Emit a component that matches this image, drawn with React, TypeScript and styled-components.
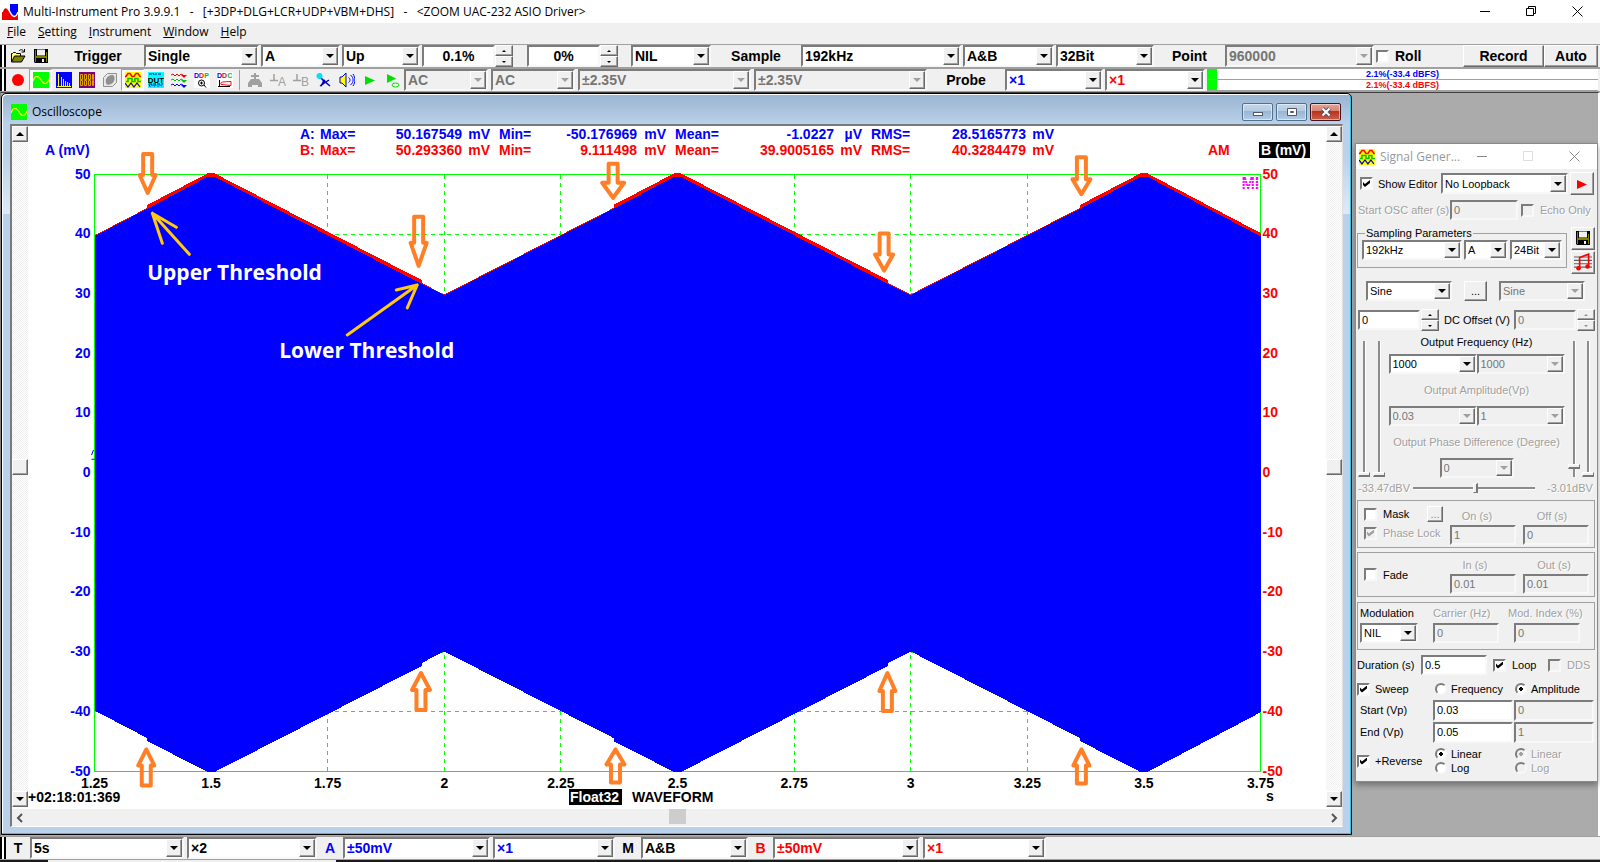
import React, { useLayoutEffect, useRef, useState } from "react";
import styled, { createGlobalStyle, css } from "styled-components";

const BLUE = "#0000ff";
const RED = "#ff0000";
const FACE = "#f0f0f0";

const GlobalStyle = createGlobalStyle`
  *, *::before, *::after { box-sizing: border-box; }
  body { margin: 0; background: ${FACE}; font-family: "Liberation Sans", Arial, sans-serif; color: #000; }
  button, input, select { font: inherit; color: inherit; margin: 0; }
`;

const raised = css`
  background: ${FACE};
  border: 1px solid;
  border-color: #fff #696969 #696969 #fff;
  box-shadow: inset -1px -1px 0 #a0a0a0;
`;

const sunken = css`
  border: 2px solid;
  border-color: #7c7c7c #f8f8f8 #f8f8f8 #7c7c7c;
`;

/* ---------- application frame ---------- */

const Frame = styled.div`
  min-height: 100vh;
  display: flex;
  flex-direction: column;
  overflow: hidden;
`;

const TitleBar = styled.header`
  height: 23px;
  flex: none;
  background: #fff;
  display: flex;
  align-items: center;
  padding-left: 2px;
  font-family: "Open Sans", "Noto Sans", sans-serif;
  font-size: 12px;
  white-space: pre;
`;

const TitleText = styled.h1`
  font: inherit;
  margin: 0 auto 0 5px;
`;

const CaptionButton = styled.button`
  width: 46px;
  height: 20px;
  border: 0;
  padding: 0;
  background: transparent;
  display: grid;
  place-items: center;
`;

const MenuBar = styled.nav`
  height: 21px;
  flex: none;
  display: flex;
  gap: 12px;
  padding-left: 7px;
  font-family: "Open Sans", "Noto Sans", sans-serif;
  font-size: 12px;
  line-height: 18px;
`;

const MenuItem = styled.a`
  color: #000;
  text-decoration: none;
`;

const ToolBar = styled.div`
  height: 24px;
  flex: none;
  display: flex;
  align-items: stretch;
  border-top: 1px solid #a0a0a0;
  border-bottom: 1px solid #a0a0a0;
  padding-right: 2px;
  font-size: 14px;
  font-weight: 700;
`;

const Grip = styled.span`
  width: 6px;
  flex: none;
  background: linear-gradient(90deg, #000 0 2px, #fff 2px 4px, #000 4px);
`;

const BarLabel = styled.label<{ $w: number; $color?: string }>`
  width: ${(p) => p.$w}px;
  flex: none;
  display: flex;
  align-items: center;
  justify-content: center;
  color: ${(p) => p.$color ?? "#000"};
`;

const Space = styled.span<{ $w: number }>`
  width: ${(p) => p.$w}px;
  flex: none;
`;

const ToolButton = styled.button<{ $on?: boolean }>`
  width: 23px;
  flex: none;
  padding: 0;
  border: 1px solid transparent;
  background: transparent;
  display: grid;
  place-items: center;
  ${(p) => p.$on && css`background: #fafafa; border-color: #a0a0a0 #fff #fff #a0a0a0;`}
`;

const Divider = styled.span`
  width: 1px;
  margin: 1px 3px;
  background: #a0a0a0;
`;

const PushButton = styled.button<{ $w?: number; $h?: number; $dim?: boolean }>`
  ${raised}
  flex: none;
  width: ${(p) => (p.$w ? p.$w + "px" : "auto")};
  height: ${(p) => (p.$h ? p.$h + "px" : "auto")};
  padding: 0;
  display: grid;
  place-items: center;
  color: ${(p) => (p.$dim ? "#8a8a8a" : "#000")};
`;

/* ---------- form parts ---------- */

const ComboFrame = styled.span<{ $w: number; $h?: number; $dim?: boolean; $color?: string }>`
  ${sunken}
  width: ${(p) => p.$w}px;
  height: ${(p) => (p.$h ? p.$h + "px" : "auto")};
  flex: none;
  display: grid;
  grid-template: minmax(0, 1fr) / minmax(0, 1fr) 16px;
  background: ${(p) => (p.$dim ? FACE : "#fff")};
  color: ${(p) => (p.$dim ? "#757575" : p.$color ?? "#000")};
`;

const NativeSelect = styled.select`
  grid-area: 1 / 1 / 2 / 3;
  appearance: none;
  border: 0;
  padding: 0 0 0 2px;
  background: transparent;
  outline: 0;
  min-width: 0;
  opacity: 1;
`;

const DropMark = styled.span<{ $dim?: boolean }>`
  ${raised}
  grid-area: 1 / 2;
  pointer-events: none;
  display: grid;
  place-items: center;
  &::after {
    content: "";
    border: 4px solid transparent;
    border-top-color: ${(p) => (p.$dim ? "#a0a0a0" : "#000")};
    border-bottom: 0;
  }
`;

function Combo(props: { label: string; value: string; w: number; h?: number; dim?: boolean; color?: string; id?: string }) {
  return (
    <ComboFrame $w={props.w} $h={props.h} $dim={props.dim} $color={props.color}>
      <NativeSelect id={props.id} aria-label={props.label} disabled={props.dim} defaultValue={props.value}>
        <option>{props.value}</option>
      </NativeSelect>
      <DropMark $dim={props.dim} />
    </ComboFrame>
  );
}

const Field = styled.input<{ $w: number; $h?: number; $center?: boolean }>`
  ${sunken}
  width: ${(p) => p.$w}px;
  height: ${(p) => (p.$h ? p.$h + "px" : "auto")};
  flex: none;
  padding: 0 2px;
  background: #fff;
  text-align: ${(p) => (p.$center ? "center" : "left")};
  border-radius: 0;
  &:disabled { background: ${FACE}; color: #757575; }
`;

const SpinFrame = styled.span<{ $h?: number }>`
  width: 18px;
  height: ${(p) => (p.$h ? p.$h + "px" : "auto")};
  flex: none;
  display: grid;
  grid-template-rows: 1fr 1fr;
`;

const SpinButton = styled.button<{ $down?: boolean }>`
  ${raised}
  padding: 0;
  min-height: 0;
  display: grid;
  place-items: center;
  &::after {
    content: "";
    border: 2px solid transparent;
    border-bottom-color: ${(p) => (p.$down ? "transparent" : "#000")};
    border-top-color: ${(p) => (p.$down ? "#000" : "transparent")};
    border-top-width: ${(p) => (p.$down ? 2 : 0)}px;
    border-bottom-width: ${(p) => (p.$down ? 0 : 2)}px;
  }
  &:disabled::after { opacity: 0.4; }
`;

function Spin({ label, h, dim }: { label: string; h?: number; dim?: boolean }) {
  return (
    <SpinFrame $h={h}>
      <SpinButton aria-label={label + " up"} disabled={dim} />
      <SpinButton $down aria-label={label + " down"} disabled={dim} />
    </SpinFrame>
  );
}

const Choice = styled.label<{ $w?: number; $gap?: number; $dim?: boolean }>`
  display: flex;
  align-items: center;
  flex: none;
  gap: ${(p) => p.$gap ?? 6}px;
  width: ${(p) => (p.$w ? p.$w + "px" : "auto")};
  color: ${(p) => (p.$dim ? "#a0a0a0" : "#000")};
  ${(p) => p.$dim && css`text-shadow: 1px 1px 0 #fff;`}
`;

const Tick = styled.input`
  ${sunken}
  appearance: none;
  width: 13px;
  height: 13px;
  flex: none;
  background: #fff;
  display: grid;
  place-items: center;
  &:disabled { background: ${FACE}; }
  &:checked::after {
    content: "";
    width: 7px;
    height: 7px;
    background: #000;
    clip-path: polygon(0 28%, 28% 57%, 100% 0, 100% 42%, 28% 100%, 0 71%);
  }
  &:checked:disabled::after { background: #a0a0a0; }
`;

const Dot = styled.input`
  ${sunken}
  appearance: none;
  width: 12px;
  height: 12px;
  flex: none;
  border-radius: 50%;
  background: #fff;
  &:disabled { background: ${FACE}; }
  &:checked { background: radial-gradient(circle, #000 0 2px, #fff 2px); }
  &:checked:disabled { background: radial-gradient(circle, #a0a0a0 0 2px, ${FACE} 2px); }
`;

/* ---------- level meter ---------- */

const Meter = styled.div`
  flex: 1;
  min-width: 0;
  margin-left: 2px;
  display: grid;
  grid-template-rows: 11px 11px;
  background: #fff;
  font-size: 9px;
  line-height: 10px;
`;

const MeterRow = styled.div<{ $color: string }>`
  color: ${(p) => p.$color};
  text-align: center;
  border-bottom: 1px solid #a0a0a0;
  background: linear-gradient(#0f0, #0f0) left / 10px 100% no-repeat;
`;

/* ---------- pictograms ---------- */

const Svg16 = (p: { children: React.ReactNode; size?: number }) => (
  <svg width={p.size ?? 16} height={p.size ?? 16} viewBox="0 0 16 16" aria-hidden="true">
    {p.children}
  </svg>
);

const AppIcon = () => (
  <Svg16>
    <rect width="16" height="16" fill="#0000ff" />
    <path d="M0 8C2 2 5 2 8 8s6 6 8 0v8H0z" fill="#f00000" />
    <path d="M0 0h8v8C5 2 2 2 0 8z" fill="#fff" />
    <path d="M0 8C2 2 5 2 8 8s6 6 8 0" fill="none" stroke="#fff" strokeWidth="1.5" />
  </Svg16>
);
const OpenIcon = () => (
  <Svg16>
    <path d="M1.5 14V5.500h1l1-1h2l1 1h4V8" fill="#ffff80" stroke="#000" />
    <path d="M1.500 14l3-6h10.500l-3.500 6z" fill="#808000" stroke="#000" />
    <path d="M9 3c1.500-2 3.500-1.500 5 .5M14.500 1v3h-3" fill="none" stroke="#000" />
  </Svg16>
);
const SaveIcon = () => (
  <Svg16>
    <path d="M1 1h14v14H2l-1-1z" fill="#000" />
    <path d="M2 2h1v12H2zM13 4h1v10h-1zM3 8h10v2H3z" fill="#808000" />
    <rect x="4" y="1.500" width="8" height="6" fill="#f0f0f0" />
    <rect x="9" y="11" width="2" height="3" fill="#f0f0f0" />
  </Svg16>
);
const ScopeIcon = () => (
  <Svg16>
    <rect width="16" height="16" fill="#00ff00" />
    <path d="M0 9C2 3 5 3 8 8s6 5 8-1" fill="none" stroke="#ffff00" strokeWidth="1.200" />
  </Svg16>
);
const SpectrumIcon = () => (
  <Svg16>
    <rect width="16" height="16" fill="#0000ff" />
    <path d="M2.500 2v12M5.500 5v9M7.500 7v7M9.500 9v5M11.500 10v4M13.500 11v3M1 14.500h14" stroke="#ffff00" />
  </Svg16>
);
const MultiIcon = () => (
  <Svg16>
    <rect width="16" height="16" fill="#800080" />
    <path
      d="M1.500 2.500h2v5h-2zM5.500 2.500h2v5h-2zM9.500 2.500h2v5h-2zM13.500 2.500h1v5h-1zM1.500 8.500h2v5h-2zM5.500 8.500h2v5h-2zM9.500 8.500h2v5h-2zM13.500 8.500h1v5h-1z"
      fill="none"
      stroke="#e0a000"
    />
  </Svg16>
);
const CubeIcon = () => (
  <Svg16>
    <path d="M1.500 5.500l4-4h9v9l-4 4h-9z" fill="#e8e8e8" stroke="#909090" />
    <path d="M4 7c2-4 7-5 8-3s1 6-3 8-6 0-5-5z" fill="#909090" />
  </Svg16>
);
const GeneratorIcon = () => (
  <Svg16>
    <rect width="16" height="16" fill="#ffff00" />
    <path d="M0 4.500h1l2-3h2l2 3h2l2-3h2l2 3h1" fill="none" stroke="#f00" strokeWidth="1.500" />
    <path d="M1 9.500h2v-3h4v3h3v-3h3v3h3" fill="none" stroke="#00c000" strokeWidth="1.500" />
    <path d="M0 11l3 4 3-4 3 4 3-4 3 4" fill="none" stroke="#0000c0" strokeWidth="1.200" />
  </Svg16>
);
const DutIcon = () => (
  <Svg16>
    <rect width="16" height="16" fill="#00ffff" />
    <path d="M1 2h3l1-1 1 2 1-1h2M10 2h4M1 12.500l1 2 2-2 2 2 2-2 2 2 2-2 2 2M1 12h14" fill="none" stroke="#0000c0" strokeDasharray="3 1" />
    <text x="8" y="10.500" textAnchor="middle" fontSize="8" fontWeight="700" fill="#000">DUT</text>
  </Svg16>
);
const FiltersIcon = () => (
  <Svg16>
    {[["#f00", 3], ["#00c000", 8], ["#00f", 13]].map(([c, y]) => (
      <g key={c} fill="none" stroke={c as string}>
        <path d={`M0 ${y}l2-1 2 2 2-2 2 2 2-2 2 1`} />
        <path d={`M10 ${y}h6l-3 3z`} fill={c as string} stroke="none" />
      </g>
    ))}
  </Svg16>
);
const LetterMark = ({ a }: { a: string }) => (
  <text y="6" fontSize="7" fontWeight="700">
    <tspan fill="#00f">{a[0]}</tspan>
    <tspan fill="#f00">{a[1]}</tspan>
    <tspan fill="#00c000">{a[2]}</tspan>
  </text>
);
const DdpIcon = () => (
  <Svg16>
    <rect width="16" height="16" fill="#fff" />
    <LetterMark a="DDP" />
    <circle cx="7.500" cy="11" r="3" fill="none" stroke="#000" />
    <path d="M6 11h3M7.500 9.500v3M10 13l2 2.500" stroke="#000" />
  </Svg16>
);
const DdcIcon = () => (
  <Svg16>
    <rect width="16" height="16" fill="#fff" />
    <LetterMark a="DDC" />
    <path d="M2.500 8v7M1 14.500h12" stroke="#000" />
    <path d="M4 12.500c-1-3 2-2.500 10-3v4z" fill="none" stroke="#f00" />
  </Svg16>
);
const TapIcon = () => (
  <Svg16>
    <path d="M7 1h2v2h3v2H9v2h3l3 4v4h-4v-2H5v2H1v-4l3-4h3V5H4V3h3z" fill="#a0a0a0" />
  </Svg16>
);
const GroundIcon = ({ c }: { c: string }) => (
  <Svg16>
    <path d="M4 2v6M0 8.500h8" stroke="#a0a0a0" strokeWidth="1.500" />
    <text x="8" y="14" fontSize="12" fontWeight="400" fill="#a0a0a0">{c}</text>
  </Svg16>
);
const ProbeIcon = () => (
  <Svg16>
    <path d="M3 4l5 5M8 9l-3 5M8 9l6 5M4 14l9-6" stroke="#0000c0" strokeWidth="1.500" />
    <circle cx="3.500" cy="4" r="3" fill="#00e0ff" />
    <circle cx="8" cy="9" r="1.500" fill="#0000c0" />
  </Svg16>
);
const SpeakerIcon = () => (
  <Svg16>
    <path d="M1 5h2l4-4v14l-4-4H1z" fill="#ffff00" stroke="#0000c0" />
    <path d="M9.500 5.500c2 1 2 4 0 5M11.500 3c3.500 3 3.500 7 0 10M14 2c2.500 4 2.500 8 0 12" fill="none" stroke="#00f" />
  </Svg16>
);
const PlayIcon = ({ c = "#00e000", loop }: { c?: string; loop?: boolean }) => (
  <Svg16>
    <path d={loop ? "M2 2l9 4.500L2 11z" : "M3 4l10 4.500L3 13z"} fill={c} />
    {loop && <ellipse cx="10.500" cy="13" rx="3.500" ry="2" fill="none" stroke={c} />}
  </Svg16>
);
const NoteIcon = () => (
  <Svg16 size={18}>
    <path d="M0 3.500h16M0 6.500h16M0 9.500h16M0 12.500h16" stroke="#606060" />
    <path d="M5 13V4l8-3v11" fill="none" stroke="#f00" strokeWidth="1.500" />
    <circle cx="4" cy="13.500" r="2" fill="#f00" />
    <circle cx="12" cy="12" r="2" fill="#f00" />
  </Svg16>
);
const CaptionGlyph = ({ kind, color = "#000" }: { kind: "min" | "max" | "restore" | "close"; color?: string }) => (
  <svg width="11" height="11" viewBox="0 0 11 11" fill="none" stroke={color} aria-hidden="true">
    {kind === "min" && <path d="M0 5.500h10" />}
    {kind === "max" && <path d="M.5.5h9v9h-9z" />}
    {kind === "restore" && <path d="M.5 2.500h7v7h-7zM2.500 2.500v-2h7v7h-2" />}
    {kind === "close" && <path d="M.5.5l10 10M10.500.5l-10 10" />}
  </svg>
);

/* ---------- workspace and oscilloscope window ---------- */

const Workspace = styled.main`
  flex: 1;
  display: flex;
  align-items: flex-start;
  gap: 3px;
  padding-bottom: 1px;
  background: #ababab;
  border-top: 1px solid #404040;
  border-left: 1px solid #808080;
  border-right: 2px solid #fff;
`;

const ScopeWindow = styled.section`
  flex: 1;
  min-width: 0;
  align-self: stretch;
  display: flex;
  flex-direction: column;
  border: 1px solid #000;
  border-radius: 5px 5px 0 0;
  box-shadow: inset -1px -1px 0 #2fc4ea, inset 1px 1px 0 #fff;
  padding: 0 8px 7px 8px;
  background: linear-gradient(#99b4d1 0, #b9d1ea 30px, #b9d1ea 60px, #dfeaf6 120px, #b9d1ea 120px);
`;

const ScopeCaption = styled.div`
  height: 30px;
  flex: none;
  display: flex;
  align-items: center;
  gap: 3px;
  padding: 6px 2px 0 1px;
  font-family: "Open Sans", "Noto Sans", sans-serif;
  font-size: 12px;
  line-height: 16px;
`;

const ScopeTitle = styled.h2`
  font: inherit;
  margin: 0 auto 0 2px;
`;

const GlassButton = styled.button<{ $close?: boolean }>`
  width: 31px;
  height: 18px;
  padding: 0;
  display: grid;
  place-items: center;
  border: 1px solid ${(p) => (p.$close ? "#43141a" : "#52708f")};
  border-radius: 2px;
  box-shadow: inset 0 0 0 1px rgba(255, 255, 255, 0.5);
  background: ${(p) =>
    p.$close
      ? "linear-gradient(#e6a397, #d98272 45%, #b8321c 46%, #c9604b)"
      : "linear-gradient(#c3d6ea, #b4cbe3 45%, #98b5d2 46%, #b3cce6)"};
`;

const ScopeBody = styled.div`
  flex: 1;
  min-height: 0;
  display: grid;
  grid-template: minmax(0, 1fr) 17px / 16px minmax(0, 1fr) 16px;
  border: 2px solid;
  border-color: #7a7a7a #e0e0e0 #fff #7a7a7a;
  border-right-width: 1px;
  border-bottom-width: 1px;
  background: #fff;
`;

const VerticalBar = styled.div`
  display: flex;
  flex-direction: column;
  justify-content: space-between;
  margin-bottom: 2px;
  background: repeating-conic-gradient(#fff 0 25%, #efefef 0 50%) 0 0 / 2px 2px;
`;

const BarButton = styled.button<{ $dir?: "up" | "down" }>`
  ${raised}
  width: 16px;
  height: 16px;
  padding: 0;
  display: grid;
  place-items: center;
  ${(p) =>
    p.$dir &&
    css`
      &::after {
        content: "";
        border: 4px solid transparent;
        border-${p.$dir === "up" ? "bottom" : "top"}-color: #000;
        border-${p.$dir === "up" ? "top" : "bottom"}: 0;
      }
    `}
`;

const HorizontalBar = styled.div`
  grid-column: 1 / 4;
  display: flex;
  justify-content: space-between;
  align-items: stretch;
  background: ${FACE};
`;

const FlatButton = styled.button`
  width: 16px;
  border: 0;
  padding: 0;
  background: transparent;
  display: grid;
  place-items: center;
`;

const Thumb = styled.span`
  width: 17px;
  height: 15px;
  background: #cdcdcd;
`;

const PlotHost = styled.div`
  min-width: 0;
  min-height: 0;
  overflow: hidden;
  & > svg { display: block; }
`;

type Arrow = { t: number; v: number; head: number; length: number; half: number; up?: boolean };

const ARROWS: Arrow[] = [
  { t: 1.364, v: 46.4, head: 21, length: 43, half: 9 },
  { t: 1.945, v: 34.2, head: 26, length: 53, half: 9 },
  { t: 2.362, v: 45.6, head: 18, length: 38, half: 12 },
  { t: 2.943, v: 33.4, head: 19, length: 41, half: 10 },
  { t: 3.366, v: 46.2, head: 18, length: 41, half: 10 },
  { t: 1.361, v: -45.8, head: 19, length: 40, half: 9, up: true },
  { t: 1.95, v: -33, head: 20, length: 41, half: 10, up: true },
  { t: 2.367, v: -45.8, head: 18, length: 37, half: 10, up: true },
  { t: 2.95, v: -33, head: 21, length: 42, half: 9, up: true },
  { t: 3.366, v: -45.8, head: 19, length: 38, half: 9, up: true },
];

const T0 = 1.25;
const T1 = 3.75;
const TICKS = Array.from({ length: 11 }, (_, i) => T0 + i * 0.25);
const LEVELS = [50, 40, 30, 20, 10, 0, -10, -20, -30, -40, -50];

/* Envelope of the swept sine; the gain steps up at the upper threshold and back at the lower one. */
function envelope(extra: number, step: number): [number, number][] {
  const pts: [number, number][] = [[T0, 39.8]];
  for (let peak = 1.5; peak < T1; peak += 1) {
    const up = peak - 0.137;
    const down = peak + 0.452;
    pts.push([up, 44.4], [up, 44.4 + step], [peak - 0.007, 50 + extra], [peak + 0.007, 50 + extra]);
    if (down < T1) pts.push([down, 31.8 + step], [down, 31.8], [peak + 0.5, 29.9]);
  }
  pts.push([T1, 40 + extra]);
  return pts;
}

const STATS = [
  { y: 13, color: BLUE, name: "A:", values: [["50.167549", "mV"], ["-50.176969", "mV"], ["-1.0227", "µV"], ["28.5165773", "mV"]] },
  { y: 29, color: RED, name: "B:", values: [["50.293360", "mV"], ["9.111498", "mV"], ["39.9005165", "mV"], ["40.3284479", "mV"]] },
];
const STAT_COLUMNS = [
  { title: "Max=", x: -357, num: -215, unit: -187 },
  { title: "Min=", x: -178, num: -40, unit: -11 },
  { title: "Mean=", x: -2, num: 157, unit: 185 },
  { title: "RMS=", x: 194, num: 349, unit: 377 },
];

function WavePlot() {
  const host = useRef<HTMLDivElement>(null);
  const [size, setSize] = useState({ w: 1298, h: 683 });

  useLayoutEffect(() => {
    const el = host.current;
    if (!el) return;
    const read = () => setSize({ w: el.clientWidth, h: el.clientHeight });
    read();
    const watcher = new ResizeObserver(read);
    watcher.observe(el);
    return () => watcher.disconnect();
  }, []);

  const { w, h } = size;
  const left = 66.5;
  const right = w - 65.5;
  const top = 48.5;
  const bottom = h - 37.5;
  const cx = Math.round(w / 2);
  const X = (t: number) => left + ((t - T0) / (T1 - T0)) * (right - left);
  const Y = (v: number) => top + ((50 - v) / 100) * (bottom - top);
  const snap = (n: number) => Math.floor(n) + 0.5;
  const line = (pts: [number, number][], sign = 1) => pts.map(([t, v]) => `${X(t)},${Y(sign * v)}`).join(" ");
  const under = line([...envelope(0.1, 0.5)].reverse(), -1);
  const redTop = line(envelope(0.2, 0.5));
  const blueTop = line(envelope(-0.2, 0).map(([t, v]) => [t, v - 0.15] as [number, number]));

  const arrowPath = (a: Arrow) => {
    const s = a.up ? -1 : 1;
    const x = X(a.t);
    const tip = Y(a.v) - 3 * s;
    const neck = tip - (a.head - 3) * s;
    const end = tip - (a.length - 4) * s;
    return `M${x - 4.5} ${end}H${x + 4.5}V${neck}H${x + a.half - 1}L${x} ${tip}L${x - a.half + 1} ${neck}H${x - 4.5}Z`;
  };
  const pointer = (x: number, y: number, rest: string) => <path d={`M${x} ${y}${rest}`} />;

  return (
    <PlotHost ref={host}>
      <svg width={w} height={h} fontFamily='"Liberation Sans", Arial, sans-serif' fontSize="14" fontWeight="700">
        <g stroke="#00ff00" strokeDasharray="4 4" shapeRendering="crispEdges">
          {TICKS.slice(1, -1).map((t) => (
            <path key={t} d={`M${snap(X(t))} ${top}V${bottom}`} />
          ))}
          {LEVELS.slice(1, -1).map((v) => (
            <path key={v} d={`M${left} ${snap(Y(v))}H${right}`} />
          ))}
        </g>
        <rect x={left} y={top} width={right - left} height={bottom - top} fill="none" stroke="#00ff00" shapeRendering="crispEdges" />
        <g shapeRendering="crispEdges">
          <polygon points={`${redTop} ${X(T1)},${Y(0)} ${X(T0)},${Y(0)}`} fill={RED} />
          <polygon points={`${blueTop} ${under}`} fill={BLUE} />
        </g>

        <g fill={BLUE} textAnchor="end">
          {LEVELS.map((v) => (
            <text key={v} x={left - 4} y={Math.round(Y(v)) + 4}>{v}</text>
          ))}
        </g>
        <g fill={RED}>
          {LEVELS.map((v) => (
            <text key={v} x={right + 2} y={Math.round(Y(v)) + 4}>{v}</text>
          ))}
        </g>
        <g textAnchor="middle">
          {TICKS.map((t) => (
            <text key={t} x={X(t)} y={h - 21}>{t}</text>
          ))}
        </g>
        <text x={17} y={29} fill={BLUE}>A (mV)</text>
        <text x={w - 118} y={29} fill={RED}>AM</text>
        <rect x={w - 67} y={16} width={51} height={16} />
        <text x={w - 65} y={29} fill="#fff">B (mV)</text>
        <text x={right - 19} y={63} fill="#ff00ff" fontSize="16">MI</text>
        <path d={`M${right - 20} 54.500h19M${right - 20} 57.500h19M${right - 20} 60.500h19`} stroke="#fff" />
        <text x={0} y={h - 7}>+02:18:01:369</text>
        <rect x={cx - 108} y={h - 20} width={53} height={16} />
        <text x={cx - 107} y={h - 7} fill="#fff">Float32</text>
        <text x={cx - 45} y={h - 7}>WAVEFORM</text>
        <text x={w - 60} y={h - 8}>s</text>
        <path d={`M${left - 3} ${Y(3)}l2-5M${left - 3} ${Y(2.300)}h3`} fill="none" stroke={BLUE} />

        {STATS.map((row) => (
          <g key={row.name} fill={row.color}>
            <text x={cx - 377} y={row.y}>{row.name}</text>
            {STAT_COLUMNS.map((c, i) => (
              <React.Fragment key={c.title}>
                <text x={cx + c.x} y={row.y}>{c.title}</text>
                <text x={cx + c.num} y={row.y} textAnchor="end">{row.values[i][0]}</text>
                <text x={cx + c.unit} y={row.y} textAnchor="end">{row.values[i][1]}</text>
              </React.Fragment>
            ))}
          </g>
        ))}

        <g fill="none" stroke="#ff7f27" strokeWidth="4" strokeLinejoin="round">
          {ARROWS.map((a, i) => (
            <path key={i} d={arrowPath(a)} />
          ))}
        </g>
        <g fill="none" stroke="#ffc90e" strokeWidth="3" strokeLinecap="round">
          {pointer(X(1.374), Y(43.5), "l37 41m-37-41l24 14m-24-14l10 30")}
          {pointer(X(1.942), Y(31.5), "l-70 50m70-50l-21 5m21-5l-10 23")}
        </g>
        <g fill="#fff" fontFamily='"Open Sans", "Noto Sans", sans-serif' fontSize="21">
          <text x={X(1.363)} y={Y(32.4)}>Upper Threshold</text>
          <text x={X(1.646)} y={Y(19.3)}>Lower Threshold</text>
        </g>
      </svg>
    </PlotHost>
  );
}

function Oscilloscope() {
  return (
    <ScopeWindow>
      <ScopeCaption>
        <ScopeIcon />
        <ScopeTitle>Oscilloscope</ScopeTitle>
        <GlassButton aria-label="Minimize">
          <svg width="12" height="10"><rect x="1.500" y="5.500" width="9" height="3" fill="#fff" stroke="#535666" /></svg>
        </GlassButton>
        <GlassButton aria-label="Maximize">
          <svg width="12" height="10"><path d="M1.500 1.500h9v7h-9zM4.500 4.500h3v1h-3z" fill="#fff" stroke="#535666" /></svg>
        </GlassButton>
        <GlassButton $close aria-label="Close">
          <svg width="12" height="10">
            <path d="M2.500 1.500l7 7M9.500 1.500l-7 7" stroke="#535666" strokeWidth="4" />
            <path d="M2.500 1.500l7 7M9.500 1.500l-7 7" stroke="#fff" strokeWidth="2" />
          </svg>
        </GlassButton>
      </ScopeCaption>
      <ScopeBody>
        <VerticalBar>
          <BarButton $dir="up" aria-label="A scale up" />
          <BarButton aria-label="A scale position" />
          <BarButton $dir="down" aria-label="A scale down" />
        </VerticalBar>
        <WavePlot />
        <VerticalBar>
          <BarButton $dir="up" aria-label="B scale up" />
          <BarButton aria-label="B scale position" />
          <BarButton $dir="down" aria-label="B scale down" />
        </VerticalBar>
        <HorizontalBar>
          <FlatButton aria-label="Scroll left">
            <svg width="8" height="10"><path d="M6 1L2 5l4 4" fill="none" stroke="#555" strokeWidth="2" /></svg>
          </FlatButton>
          <Thumb />
          <FlatButton aria-label="Scroll right">
            <svg width="8" height="10"><path d="M2 1l4 4-4 4" fill="none" stroke="#555" strokeWidth="2" /></svg>
          </FlatButton>
        </HorizontalBar>
      </ScopeBody>
    </ScopeWindow>
  );
}

/* ---------- signal generator ---------- */

const GeneratorWindow = styled.aside`
  width: 243px;
  flex: none;
  margin-top: 50px;
  padding-bottom: 5px;
  border: 1px solid #8a8a8a;
  background: ${FACE};
  box-shadow: 0 3px 6px rgba(0, 0, 0, 0.35);
  font-size: 11px;
  line-height: 14px;
`;

const GeneratorCaption = styled.div`
  height: 25px;
  display: flex;
  align-items: center;
  padding-left: 3px;
  background: #fff;
  color: #999;
  font-family: "Open Sans", "Noto Sans", sans-serif;
  font-size: 12px;
`;

const GeneratorTitle = styled.h2`
  font: inherit;
  margin: 0 auto 0 5px;
  white-space: nowrap;
`;

const Row = styled.div<{ $h: number; $top?: number; $left?: number; $gap?: number }>`
  height: ${(p) => p.$h}px;
  margin-top: ${(p) => p.$top ?? 0}px;
  padding-left: ${(p) => p.$left ?? 2}px;
  display: flex;
  align-items: center;
  gap: ${(p) => p.$gap ?? 0}px;
`;

const Caption = styled.label<{ $w?: number; $dim?: boolean; $center?: boolean }>`
  width: ${(p) => (p.$w ? p.$w + "px" : "auto")};
  flex: none;
  white-space: nowrap;
  text-align: ${(p) => (p.$center ? "center" : "left")};
  color: ${(p) => (p.$dim ? "#a0a0a0" : "#000")};
  ${(p) => p.$dim && css`text-shadow: 1px 1px 0 #fff;`}
`;

const Sampling = styled.fieldset`
  width: 210px;
  flex: none;
  height: 42px;
  align-self: flex-start;
  margin: 0;
  padding: 0 0 0 4px;
  border: 1px solid #a0a0a0;
  display: flex;
  gap: 2px;
  align-items: flex-start;
  & > legend { padding: 0 1px; margin-left: 3px; line-height: 14px; }
`;

const ButtonStack = styled.div`
  display: flex;
  flex-direction: column;
  gap: 1px;
`;

const Group = styled.div<{ $top: number }>`
  margin: ${(p) => p.$top}px 2px 0 1px;
  border: 1px solid #a0a0a0;
  display: flex;
  align-items: flex-start;
`;

const Column = styled.div<{ $w: number; $h?: number; $left?: number; $end?: boolean }>`
  width: ${(p) => p.$w}px;
  height: ${(p) => (p.$h ? p.$h + "px" : "auto")};
  padding-left: ${(p) => p.$left ?? 0}px;
  flex: none;
  display: flex;
  flex-direction: column;
  justify-content: ${(p) => (p.$end ? "flex-end" : "center")};
`;

const Mixer = styled.div`
  height: 144px;
  margin-top: 4px;
  padding: 0 3px 0 2px;
  display: flex;
  justify-content: space-between;
`;

const MixerCenter = styled.div`
  width: 178px;
  display: flex;
  flex-direction: column;
  align-items: center;
`;

const VerticalSlider = styled.input`
  appearance: none;
  writing-mode: vertical-lr;
  direction: rtl;
  width: 12px;
  height: 136px;
  margin-top: 6px;
  background: transparent;
  &::-webkit-slider-runnable-track {
    width: 3px;
    background: linear-gradient(90deg, #8c8c8c 2px, #fff 2px);
  }
  &::-webkit-slider-thumb {
    appearance: none;
    width: 12px;
    height: 5px;
    margin-left: -5px;
    background: #f0f0f0;
    border: 1px solid;
    border-color: #fff #777 #777 #fff;
    border-bottom-width: 2px;
  }
`;

const Pair = styled.div`
  display: flex;
`;

const LevelSlider = styled.input`
  appearance: none;
  width: 122px;
  height: 12px;
  background: transparent;
  &::-webkit-slider-runnable-track {
    height: 3px;
    background: linear-gradient(#8c8c8c 2px, #fff 2px);
  }
  &::-webkit-slider-thumb {
    appearance: none;
    width: 5px;
    height: 10px;
    margin-top: -4px;
    background: #f0f0f0;
    border: 1px solid;
    border-color: #fff #777 #777 #fff;
    border-right-width: 2px;
  }
`;

function SignalGenerator() {
  return (
    <GeneratorWindow>
      <GeneratorCaption>
        <GeneratorIcon />
        <GeneratorTitle>Signal Gener...</GeneratorTitle>
        <CaptionButton aria-label="Minimize generator"><CaptionGlyph kind="min" color="#888" /></CaptionButton>
        <CaptionButton aria-label="Maximize generator"><CaptionGlyph kind="max" color="#ddd" /></CaptionButton>
        <CaptionButton aria-label="Close generator"><CaptionGlyph kind="close" color="#888" /></CaptionButton>
      </GeneratorCaption>

      <Row $h={23} $top={3} $left={4}>
        <Choice $w={81} $gap={5}><Tick type="checkbox" defaultChecked />Show Editor</Choice>
        <Combo label="Loopback" value="No Loopback" w={127} h={21} />
        <Space $w={2} />
        <PushButton $w={24} $h={23} aria-label="Start generator"><PlayIcon c={RED} /></PushButton>
      </Row>
      <Row $h={20} $top={5}>
        <Caption $w={92} $dim htmlFor="start-osc">Start OSC after (s)</Caption>
        <Field id="start-osc" $w={68} $h={20} defaultValue="0" disabled />
        <Space $w={3} />
        <Choice $dim><Tick type="checkbox" disabled />Echo Only</Choice>
      </Row>
      <Row $h={48} $top={6} $left={1} $gap={4}>
        <Sampling>
          <legend>Sampling Parameters</legend>
          <Combo label="Sampling rate" value="192kHz" w={100} h={20} />
          <Combo label="Channels" value="A" w={44} h={20} />
          <Combo label="Bit resolution" value="24Bit" w={52} h={20} />
        </Sampling>
        <ButtonStack>
          <PushButton $w={24} $h={23} aria-label="Save"><SaveIcon /></PushButton>
          <PushButton $w={24} $h={23} aria-label="Music scale"><NoteIcon /></PushButton>
        </ButtonStack>
      </Row>
      <Row $h={20} $top={7} $left={10} $gap={12}>
        <Combo label="Waveform A" value="Sine" w={86} h={20} />
        <PushButton $w={23} $h={20}>...</PushButton>
        <Combo label="Waveform B" value="Sine" w={86} h={20} dim />
      </Row>
      <Row $h={22} $top={8} $gap={1}>
        <Field aria-label="DC offset A" $w={62} $h={20} defaultValue="0" />
        <Spin label="DC offset A" h={22} />
        <Space $w={3} />
        <Caption $w={69} htmlFor="dc-b">DC Offset (V)</Caption>
        <Field id="dc-b" $w={62} $h={20} defaultValue="0" disabled />
        <Spin label="DC offset B" h={22} dim />
      </Row>

      <Mixer>
        <Pair>
          <VerticalSlider type="range" aria-label="Level A coarse" defaultValue={0} />
          <Space $w={3} />
          <VerticalSlider type="range" aria-label="Level A fine" defaultValue={0} />
        </Pair>
        <MixerCenter>
          <Row $h={14} $left={0}><Caption htmlFor="freq">Output Frequency (Hz)</Caption></Row>
          <Row $h={20} $top={5} $left={0}>
            <Combo id="freq" label="Output frequency A" value="1000" w={88} h={20} />
            <Combo label="Output frequency B" value="1000" w={88} h={20} dim />
          </Row>
          <Row $h={32} $left={0}><Caption $dim htmlFor="amp">Output Amplitude(Vp)</Caption></Row>
          <Row $h={20} $left={0}>
            <Combo id="amp" label="Output amplitude A" value="0.03" w={88} h={20} dim />
            <Combo label="Output amplitude B" value="1" w={88} h={20} dim />
          </Row>
          <Row $h={32} $left={0}><Caption $dim htmlFor="phase">Output Phase Difference (Degree)</Caption></Row>
          <Combo id="phase" label="Phase difference" value="0" w={74} h={20} dim />
        </MixerCenter>
        <Pair>
          <VerticalSlider type="range" aria-label="Level B coarse" defaultValue={6} />
          <Space $w={2} />
          <VerticalSlider type="range" aria-label="Level B fine" defaultValue={0} />
        </Pair>
      </Mixer>

      <Row $h={16} $top={1} $gap={3}>
        <Caption $dim htmlFor="balance" $w={52}>-33.47dBV</Caption>
        <LevelSlider id="balance" type="range" defaultValue={51} />
        <Space $w={6} />
        <Caption $dim htmlFor="balance">-3.01dBV</Caption>
      </Row>

      <Group $top={4}>
        <Column $w={92} $left={6} $h={46}>
          <Row $h={18} $left={0}>
            <Choice $w={63}><Tick type="checkbox" />Mask</Choice>
            <PushButton $w={16} $h={16} $dim>...</PushButton>
          </Row>
          <Row $h={20} $left={0}><Choice $dim><Tick type="checkbox" defaultChecked disabled />Phase Lock</Choice></Row>
        </Column>
        <Column $w={73} $h={46} $end>
          <Caption $w={54} $dim $center htmlFor="on">On (s)</Caption>
          <Row $h={24} $left={0}><Field id="on" $w={66} $h={20} defaultValue="1" disabled /></Row>
        </Column>
        <Column $w={66} $h={46} $end>
          <Caption $w={58} $dim $center htmlFor="off">Off (s)</Caption>
          <Row $h={24} $left={0}><Field id="off" $w={66} $h={20} defaultValue="0" disabled /></Row>
        </Column>
      </Group>
      <Group $top={4}>
        <Column $w={92} $left={6} $h={43}>
          <Choice><Tick type="checkbox" />Fade</Choice>
        </Column>
        <Column $w={73} $h={43} $end>
          <Caption $w={50} $dim $center htmlFor="fin">In (s)</Caption>
          <Row $h={24} $left={0}><Field id="fin" $w={66} $h={20} defaultValue="0.01" disabled /></Row>
        </Column>
        <Column $w={66} $h={43} $end>
          <Caption $w={62} $dim $center htmlFor="fout">Out (s)</Caption>
          <Row $h={24} $left={0}><Field id="fout" $w={66} $h={20} defaultValue="0.01" disabled /></Row>
        </Column>
      </Group>
      <Group $top={5}>
        <Column $w={75} $left={2} $h={46}>
          <Caption htmlFor="mod">Modulation</Caption>
          <Row $h={26} $left={0}><Combo id="mod" label="Modulation" value="NIL" w={58} h={20} /></Row>
        </Column>
        <Column $w={75} $h={46}>
          <Caption $dim htmlFor="carrier">Carrier (Hz)</Caption>
          <Row $h={26} $left={0}><Field id="carrier" $w={66} $h={20} defaultValue="0" disabled /></Row>
        </Column>
        <Column $w={80} $h={46}>
          <Caption $dim htmlFor="index">Mod. Index (%)</Caption>
          <Row $h={26} $left={6}><Field id="index" $w={66} $h={20} defaultValue="0" disabled /></Row>
        </Column>
      </Group>

      <Row $h={20} $top={5} $left={1}>
        <Caption $w={64} htmlFor="duration">Duration (s)</Caption>
        <Field id="duration" $w={66} $h={20} defaultValue="0.5" />
        <Space $w={6} />
        <Choice $w={55}><Tick type="checkbox" defaultChecked />Loop</Choice>
        <Choice $dim><Tick type="checkbox" disabled />DDS</Choice>
      </Row>
      <Row $h={20} $top={4} $left={1}>
        <Choice $w={78} $gap={5}><Tick type="checkbox" defaultChecked />Sweep</Choice>
        <Choice $w={80} $gap={4}><Dot type="radio" name="sweep" />Frequency</Choice>
        <Choice $gap={4}><Dot type="radio" name="sweep" defaultChecked />Amplitude</Choice>
      </Row>
      <Row $h={22} $left={4} $gap={1}>
        <Caption $w={72} htmlFor="start">Start (Vp)</Caption>
        <Field id="start" $w={80} $h={21} defaultValue="0.03" />
        <Field aria-label="Start B" $w={80} $h={21} defaultValue="0" disabled />
      </Row>
      <Row $h={22} $left={4} $gap={1}>
        <Caption $w={72} htmlFor="end">End (Vp)</Caption>
        <Field id="end" $w={80} $h={21} defaultValue="0.05" />
        <Field aria-label="End B" $w={80} $h={21} defaultValue="1" disabled />
      </Row>
      <Row $h={30} $top={3} $left={1}>
        <Choice $w={78} $gap={5}><Tick type="checkbox" defaultChecked />+Reverse</Choice>
        <Column $w={80}>
          <Choice $gap={4}><Dot type="radio" name="scale-a" defaultChecked />Linear</Choice>
          <Choice $gap={4}><Dot type="radio" name="scale-a" />Log</Choice>
        </Column>
        <Column $w={78}>
          <Choice $dim $gap={4}><Dot type="radio" name="scale-b" defaultChecked disabled />Linear</Choice>
          <Choice $dim $gap={4}><Dot type="radio" name="scale-b" disabled />Log</Choice>
        </Column>
      </Row>
    </GeneratorWindow>
  );
}

const TaskStrip = styled.footer`
  height: 3px;
  flex: none;
  background: linear-gradient(90deg, #1a1a1a 48px, #f0f0f0 48px 336px, #1a1a1a 336px);
`;

const RollChoice = styled.label`
  flex: 1;
  display: flex;
  align-items: center;
  gap: 6px;
  padding-left: 2px;
`;

export default function App() {
  return (
    <Frame>
      <GlobalStyle />
      <TitleBar>
        <AppIcon />
        <TitleText>{"Multi-Instrument Pro 3.9.9.1   -   [+3DP+DLG+LCR+UDP+VBM+DHS]   -   <ZOOM UAC-232 ASIO Driver>"}</TitleText>
        <CaptionButton aria-label="Minimize"><CaptionGlyph kind="min" /></CaptionButton>
        <CaptionButton aria-label="Restore"><CaptionGlyph kind="restore" /></CaptionButton>
        <CaptionButton aria-label="Close"><CaptionGlyph kind="close" /></CaptionButton>
      </TitleBar>
      <MenuBar>
        {["File", "Setting", "Instrument", "Window", "Help"].map((m) => (
          <MenuItem key={m} href="#"><u>{m[0]}</u>{m.slice(1)}</MenuItem>
        ))}
      </MenuBar>

      <ToolBar>
        <Grip />
        <ToolButton aria-label="Open"><OpenIcon /></ToolButton>
        <ToolButton aria-label="Save"><SaveIcon /></ToolButton>
        <BarLabel $w={92} htmlFor="trigger">Trigger</BarLabel>
        <Combo id="trigger" label="Trigger mode" value="Single" w={115} />
        <Space $w={2} />
        <Combo label="Trigger source" value="A" w={79} />
        <Space $w={2} />
        <Combo label="Trigger edge" value="Up" w={78} />
        <Space $w={2} />
        <Field aria-label="Trigger level" $w={73} $center defaultValue="0.1%" />
        <Spin label="Trigger level" />
        <Space $w={14} />
        <Field aria-label="Trigger delay" $w={73} $center defaultValue="0%" />
        <Spin label="Trigger delay" />
        <Space $w={13} />
        <Combo label="Trigger filter" value="NIL" w={80} />
        <BarLabel $w={90} htmlFor="rate">Sample</BarLabel>
        <Combo id="rate" label="Sampling rate" value="192kHz" w={160} />
        <Space $w={2} />
        <Combo label="Channels" value="A&B" w={91} />
        <Space $w={2} />
        <Combo label="Bits" value="32Bit" w={98} />
        <BarLabel $w={71} htmlFor="points">Point</BarLabel>
        <Combo id="points" label="Record length" value="960000" w={149} dim />
        <RollChoice><Tick type="checkbox" />Roll</RollChoice>
        <PushButton $w={81}>Record</PushButton>
        <PushButton $w={54}>Auto</PushButton>
      </ToolBar>

      <ToolBar>
        <Grip />
        <ToolButton aria-label="Run"><Svg16><circle cx="8" cy="8" r="6" fill={RED} /></Svg16></ToolButton>
        <ToolButton $on aria-label="Oscilloscope"><ScopeIcon /></ToolButton>
        <ToolButton aria-label="Spectrum analyzer"><SpectrumIcon /></ToolButton>
        <ToolButton aria-label="Multimeter"><MultiIcon /></ToolButton>
        <ToolButton aria-label="3D plot"><CubeIcon /></ToolButton>
        <ToolButton $on aria-label="Signal generator"><GeneratorIcon /></ToolButton>
        <ToolButton aria-label="Device test plan"><DutIcon /></ToolButton>
        <ToolButton aria-label="Data logger"><FiltersIcon /></ToolButton>
        <ToolButton aria-label="DDP viewer"><DdpIcon /></ToolButton>
        <ToolButton aria-label="DDC"><DdcIcon /></ToolButton>
        <Divider />
        <ToolButton aria-label="Tap"><TapIcon /></ToolButton>
        <ToolButton aria-label="Ground A"><GroundIcon c="A" /></ToolButton>
        <ToolButton aria-label="Ground B"><GroundIcon c="B" /></ToolButton>
        <ToolButton aria-label="Probe calibration"><ProbeIcon /></ToolButton>
        <ToolButton aria-label="Speaker"><SpeakerIcon /></ToolButton>
        <ToolButton aria-label="Play"><PlayIcon /></ToolButton>
        <ToolButton aria-label="Play loop"><PlayIcon loop /></ToolButton>
        <Combo label="Coupling A" value="AC" w={84} dim />
        <Space $w={3} />
        <Combo label="Coupling B" value="AC" w={84} dim />
        <Space $w={3} />
        <Combo label="Range A" value="±2.35V" w={173} dim />
        <Space $w={3} />
        <Combo label="Range B" value="±2.35V" w={173} dim />
        <BarLabel $w={78} htmlFor="probe">Probe</BarLabel>
        <Combo id="probe" label="Probe A" value="×1" w={98} color={BLUE} />
        <Space $w={2} />
        <Combo label="Probe B" value="×1" w={100} color={RED} />
        <Meter>
          <MeterRow $color={BLUE}>2.1%(-33.4 dBFS)</MeterRow>
          <MeterRow $color={RED}>2.1%(-33.4 dBFS)</MeterRow>
        </Meter>
      </ToolBar>

      <Workspace>
        <Oscilloscope />
        <SignalGenerator />
      </Workspace>

      <ToolBar>
        <Grip />
        <BarLabel $w={24} htmlFor="sweep">T</BarLabel>
        <Combo id="sweep" label="Sweep time" value="5s" w={154} />
        <Space $w={3} />
        <Combo label="Time zoom" value="×2" w={130} />
        <BarLabel $w={26} $color={BLUE} htmlFor="va">A</BarLabel>
        <Combo id="va" label="Scale A" value="±50mV" w={147} color={BLUE} />
        <Space $w={3} />
        <Combo label="Zoom A" value="×1" w={122} color={BLUE} />
        <BarLabel $w={26} htmlFor="mode">M</BarLabel>
        <Combo id="mode" label="View mode" value="A&B" w={107} />
        <BarLabel $w={25} $color={RED} htmlFor="vb">B</BarLabel>
        <Combo id="vb" label="Scale B" value="±50mV" w={147} color={RED} />
        <Space $w={3} />
        <Combo label="Zoom B" value="×1" w={123} color={RED} />
      </ToolBar>
      <TaskStrip />
    </Frame>
  );
}
